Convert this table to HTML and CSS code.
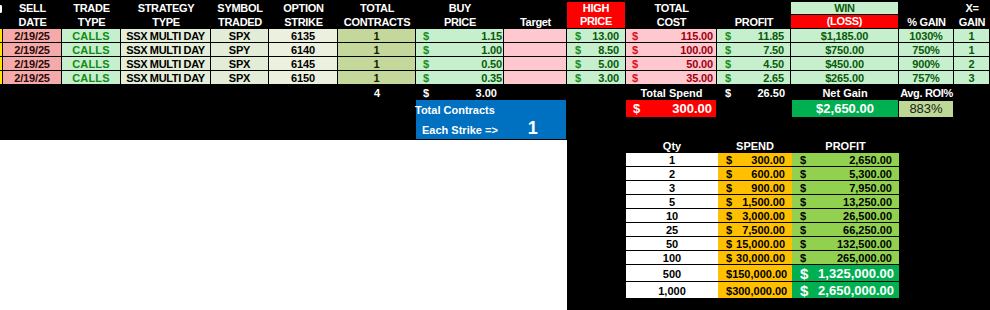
FILE: index.html
```html
<!DOCTYPE html>
<html lang="en">
<head>
<meta charset="utf-8">
<title>SSX Multi Day Trades</title>
<link rel="stylesheet" href="styles.css">
</head>
<body>
<div class="sheet">
  <section class="grid top">
    <div class="h c0h"><span class="frag"></span></div>
    <div class="h">SELL<br>DATE</div>
    <div class="h">TRADE<br>TYPE</div>
    <div class="h">STRATEGY<br>TYPE</div>
    <div class="h">SYMBOL<br>TRADED</div>
    <div class="h">OPTION<br>STRIKE</div>
    <div class="h">TOTAL<br>CONTRACTS</div>
    <div class="h">BUY<br>PRICE</div>
    <div class="h">Target</div>
    <div class="h hp"><div class="hp-box">HIGH<br>PRICE</div></div>
    <div class="h">TOTAL<br>COST</div>
    <div class="h">PROFIT</div>
    <div class="h wl"><div class="win">WIN</div><div class="loss">(LOSS)</div></div>
    <div class="h">% GAIN</div>
    <div class="h">X=<br>GAIN</div>

    <div class="d c0"></div>
    <div class="d date">2/19/25</div>
    <div class="d calls">CALLS</div>
    <div class="d strat">SSX MULTI DAY</div>
    <div class="d sym">SPX</div>
    <div class="d strike">6135</div>
    <div class="d qty">1</div>
    <div class="d money buy"><span class="dol">$</span><span>1.15</span></div>
    <div class="d target"></div>
    <div class="d money high"><span class="dol">$</span><span>13.00</span></div>
    <div class="d money cost"><span class="dol">$</span><span>115.00</span></div>
    <div class="d money prof"><span class="dol">$</span><span>11.85</span></div>
    <div class="d gr">$1,185.00</div>
    <div class="d gr">1030%</div>
    <div class="d gr">1</div>

    <div class="d c0"></div>
    <div class="d date">2/19/25</div>
    <div class="d calls">CALLS</div>
    <div class="d strat">SSX MULTI DAY</div>
    <div class="d sym">SPY</div>
    <div class="d strike">6140</div>
    <div class="d qty">1</div>
    <div class="d money buy"><span class="dol">$</span><span>1.00</span></div>
    <div class="d target"></div>
    <div class="d money high"><span class="dol">$</span><span>8.50</span></div>
    <div class="d money cost"><span class="dol">$</span><span>100.00</span></div>
    <div class="d money prof"><span class="dol">$</span><span>7.50</span></div>
    <div class="d gr">$750.00</div>
    <div class="d gr">750%</div>
    <div class="d gr">1</div>

    <div class="d c0"></div>
    <div class="d date">2/19/25</div>
    <div class="d calls">CALLS</div>
    <div class="d strat">SSX MULTI DAY</div>
    <div class="d sym">SPX</div>
    <div class="d strike">6145</div>
    <div class="d qty">1</div>
    <div class="d money buy"><span class="dol">$</span><span>0.50</span></div>
    <div class="d target"></div>
    <div class="d money high"><span class="dol">$</span><span>5.00</span></div>
    <div class="d money cost"><span class="dol">$</span><span>50.00</span></div>
    <div class="d money prof"><span class="dol">$</span><span>4.50</span></div>
    <div class="d gr">$450.00</div>
    <div class="d gr">900%</div>
    <div class="d gr">2</div>

    <div class="d c0"></div>
    <div class="d date">2/19/25</div>
    <div class="d calls">CALLS</div>
    <div class="d strat">SSX MULTI DAY</div>
    <div class="d sym">SPX</div>
    <div class="d strike">6150</div>
    <div class="d qty">1</div>
    <div class="d money buy"><span class="dol">$</span><span>0.35</span></div>
    <div class="d target"></div>
    <div class="d money high"><span class="dol">$</span><span>3.00</span></div>
    <div class="d money cost"><span class="dol">$</span><span>35.00</span></div>
    <div class="d money prof"><span class="dol">$</span><span>2.65</span></div>
    <div class="d gr">$265.00</div>
    <div class="d gr">757%</div>
    <div class="d gr">3</div>

    <div class="t"></div>
    <div class="t"></div>
    <div class="t"></div>
    <div class="t"></div>
    <div class="t"></div>
    <div class="t"></div>
    <div class="t ctr">4</div>
    <div class="t tmoney tbuy"><span>$</span><span>3.00</span></div>
    <div class="t"></div>
    <div class="t"></div>
    <div class="t ctr">Total Spend</div>
    <div class="t tmoney tprof"><span>$</span><span>26.50</span></div>
    <div class="t ctr">Net Gain</div>
    <div class="t ctr roi">Avg. ROI%</div>
    <div class="t"></div>
  </section>

  <section class="grid mid">
    <div class="contracts">
      <div class="ct-title">Total Contracts</div>
      <div class="ct-row"><span>Each Strike =&gt;</span><span class="ct-num">1</span></div>
    </div>
    <div class="spend"><span>$</span><span>300.00</span></div>
    <div class="net">$2,650.00</div>
    <div class="avg">883%</div>
  </section>

  <section class="grid lower">
    <div class="blank"></div>
    <div class="calc">
      <div class="ch">Qty</div>
      <div class="ch">SPEND</div>
      <div class="ch">PROFIT</div>

      <div class="cq">1</div>
      <div class="cs"><span>$</span><span>300.00</span></div>
      <div class="cp"><span>$</span><span>2,650.00</span></div>

      <div class="cq">2</div>
      <div class="cs"><span>$</span><span>600.00</span></div>
      <div class="cp"><span>$</span><span>5,300.00</span></div>

      <div class="cq">3</div>
      <div class="cs"><span>$</span><span>900.00</span></div>
      <div class="cp"><span>$</span><span>7,950.00</span></div>

      <div class="cq">5</div>
      <div class="cs"><span>$</span><span>1,500.00</span></div>
      <div class="cp"><span>$</span><span>13,250.00</span></div>

      <div class="cq">10</div>
      <div class="cs"><span>$</span><span>3,000.00</span></div>
      <div class="cp"><span>$</span><span>26,500.00</span></div>

      <div class="cq">25</div>
      <div class="cs"><span>$</span><span>7,500.00</span></div>
      <div class="cp"><span>$</span><span>66,250.00</span></div>

      <div class="cq">50</div>
      <div class="cs"><span>$</span><span>15,000.00</span></div>
      <div class="cp"><span>$</span><span>132,500.00</span></div>

      <div class="cq">100</div>
      <div class="cs"><span>$</span><span>30,000.00</span></div>
      <div class="cp"><span>$</span><span>265,000.00</span></div>

      <div class="cq big">500</div>
      <div class="cs big"><span>$</span><span>150,000.00</span></div>
      <div class="cp big"><span>$</span><span>1,325,000.00</span></div>

      <div class="cq big">1,000</div>
      <div class="cs big"><span>$</span><span>300,000.00</span></div>
      <div class="cp big"><span>$</span><span>2,650,000.00</span></div>
    </div>
  </section>
</div>
</body>
</html>
```

FILE: styles.css
```css
* { box-sizing: border-box; }

html, body {
  margin: 0;
  padding: 0;
  background: #000;
}

body {
  width: 990px;
  height: 310px;
  overflow: hidden;
  font-family: "Liberation Sans", Arial, sans-serif;
  font-weight: 700;
  font-size: 11px;
  color: #000;
}

.sheet {
  display: flex;
  flex-direction: column;
}

.grid {
  display: grid;
  grid-template-columns: 3px 59px 59px 90px 58px 69px 78px 88px 63px 59px 91px 74px 108px 55px 36px;
}

.top { grid-template-rows: 29px repeat(4, 14px) 15px; }
.mid { grid-template-rows: 18px 21px; }
.lower { grid-template-rows: 171px; }

/* header row */
.h {
  color: #fff;
  display: flex;
  align-items: flex-end;
  justify-content: center;
  text-align: center;
  line-height: 14px;
  letter-spacing: -0.3px;
  white-space: nowrap;
}

.c0h {
  justify-content: flex-start;
  align-items: flex-start;
  padding-top: 5px;
}

.frag {
  display: block;
  width: 2px;
  height: 8px;
  border-top: 2px solid #fff;
  border-right: 2px solid #fff;
  border-bottom: 2px solid #fff;
  border-radius: 0 2px 2px 0;
}

.hp {
  align-items: stretch;
  padding: 2px 1px 1px 0;
}

.hp-box {
  flex: 1;
  background: #ff0000;
  display: flex;
  align-items: center;
  justify-content: center;
  line-height: 13px;
}

.wl {
  flex-direction: column;
  align-items: stretch;
  justify-content: flex-start;
  padding: 2px 1px 1px 0;
}

.win {
  height: 12px;
  line-height: 12px;
  background: #c6efce;
  color: #0b5a0b;
}

.loss {
  margin-top: 1px;
  height: 13px;
  line-height: 13px;
  background: #ff0000;
  color: #fff;
}

/* data cells */
.d {
  border-right: 1px solid #000;
  border-bottom: 1px solid #000;
  padding-top: 2px;
  line-height: 11px;
  white-space: nowrap;
  overflow: hidden;
  text-align: center;
  letter-spacing: -0.15px;
}

.c0 { background: #ffe600; }
.date { background: #f4aaa9; color: #2a0a0a; }
.calls { background: #c6efce; color: #138a13; letter-spacing: 0.2px; }
.strat { background: #e4edd8; letter-spacing: -0.35px; }
.sym { background: #e2ecd6; }
.strike { background: #ebf1de; }
.qty { background: #c4d89c; color: #142000; }
.target { background: #ffc7ce; }
.gr { background: #c6efce; color: #0b5a0b; }

.money {
  display: flex;
  justify-content: space-between;
  background: #c6efce;
  color: #0b5a0b;
}

.money .dol { color: #1a8c1a; }

.buy { padding-left: 7px; padding-right: 1px; }
.high { padding-left: 8px; padding-right: 6px; }
.cost { background: #ffc7ce; color: #9c0010; padding-left: 6px; padding-right: 3px; }
.cost .dol { color: #d8101c; }
.prof { padding-left: 8px; padding-right: 6px; }

/* totals row */
.t {
  color: #fff;
  padding-top: 2px;
  line-height: 13px;
  white-space: nowrap;
}

.ctr { text-align: center; }
.roi { letter-spacing: -0.35px; }

.tmoney {
  display: flex;
  justify-content: space-between;
}

.tbuy { padding-left: 7px; padding-right: 7px; }
.tprof { padding-left: 8px; padding-right: 6px; }

/* middle band */
.contracts {
  grid-column: 8 / 10;
  grid-row: 1 / 3;
  margin-right: 1px;
  background: #0070c0;
  color: #fff;
  display: flex;
  flex-direction: column;
}

.ct-title {
  height: 18px;
  padding-top: 4px;
  line-height: 12px;
  margin-left: -1px;
}

.ct-row {
  display: flex;
  align-items: baseline;
  gap: 30px;
  padding-left: 6px;
  padding-top: 1px;
  line-height: 18px;
}

.ct-num { font-size: 18px; }

.spend {
  grid-column: 11;
  grid-row: 1;
  margin: 0 1px 1px 0;
  background: #ff0000;
  color: #fff;
  font-size: 13px;
  line-height: 17px;
  display: flex;
  justify-content: space-between;
  padding: 0 4px 0 7px;
}

.net {
  grid-column: 13;
  grid-row: 1;
  margin: 0 1px 1px 1px;
  background: #00b050;
  color: #fff;
  font-size: 13px;
  line-height: 17px;
  text-align: center;
}

.avg {
  grid-column: 14;
  grid-row: 1;
  margin: 1px 1px 1px 0;
  background: #bcd995;
  color: #1a1a1a;
  font-weight: 400;
  font-size: 13px;
  line-height: 16px;
  text-align: center;
}

/* lower area */
.blank {
  grid-column: 1 / 10;
  grid-row: 1;
  margin-top: 1px;
  background: #fff;
}

.calc {
  grid-column: 11 / 14;
  grid-row: 1;
  display: grid;
  grid-template-columns: 92px 74px 107px;
  grid-template-rows: repeat(9, 14px) 17px 17px;
  align-content: start;
}

.ch {
  color: #fff;
  text-align: center;
  padding-top: 2px;
  line-height: 11px;
}

.cq, .cs, .cp {
  border-bottom: 1px solid #000;
  padding-top: 2px;
  line-height: 11px;
  white-space: nowrap;
}

.cq { background: #fff; text-align: center; }

.cs {
  background: #ffc000;
  display: flex;
  justify-content: space-between;
  padding-left: 8px;
  padding-right: 7px;
}

.cp {
  background: #92d050;
  display: flex;
  justify-content: space-between;
  padding-left: 8px;
  padding-right: 7px;
}

.cq.big, .cs.big { padding-top: 4px; }

.cp.big {
  background: #00b050;
  color: #fff;
  font-size: 13px;
  line-height: 14px;
  padding-top: 2px;
  padding-left: 8px;
  padding-right: 5px;
}

.cp.big span:first-child { font-size: 15px; }
```
